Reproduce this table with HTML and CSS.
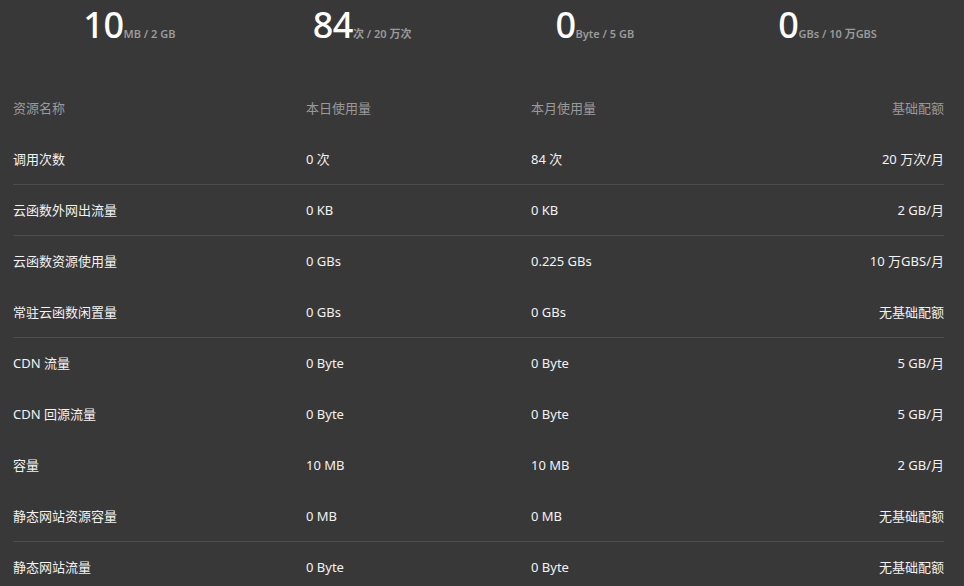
FILE: index.html
```html
<!DOCTYPE html>
<html lang="zh-CN">
<head>
<meta charset="utf-8">
<title>用量</title>
<link rel="stylesheet" href="styles.css">
</head>
<body>
<div class="page">
  <div class="stats">
    <div class="stat"><span class="num">10</span><span class="unit">MB / 2 GB</span></div>
    <div class="stat"><span class="num">84</span><span class="unit">次 / 20 万次</span></div>
    <div class="stat"><span class="num">0</span><span class="unit">Byte / 5 GB</span></div>
    <div class="stat"><span class="num">0</span><span class="unit">GBs / 10 万GBS</span></div>
  </div>
  <div class="table">
    <div class="row head"><span>资源名称</span><span>本日使用量</span><span>本月使用量</span><span class="r">基础配额</span></div>
    <div class="row line"><span>调用次数</span><span>0 次</span><span>84 次</span><span class="r">20 万次/月</span></div>
    <div class="row line"><span>云函数外网出流量</span><span>0 KB</span><span>0 KB</span><span class="r">2 GB/月</span></div>
    <div class="row"><span>云函数资源使用量</span><span>0 GBs</span><span>0.225 GBs</span><span class="r">10 万GBS/月</span></div>
    <div class="row line"><span>常驻云函数闲置量</span><span>0 GBs</span><span>0 GBs</span><span class="r">无基础配额</span></div>
    <div class="row"><span>CDN 流量</span><span>0 Byte</span><span>0 Byte</span><span class="r">5 GB/月</span></div>
    <div class="row"><span>CDN 回源流量</span><span>0 Byte</span><span>0 Byte</span><span class="r">5 GB/月</span></div>
    <div class="row"><span>容量</span><span>10 MB</span><span>10 MB</span><span class="r">2 GB/月</span></div>
    <div class="row line"><span>静态网站资源容量</span><span>0 MB</span><span>0 MB</span><span class="r">无基础配额</span></div>
    <div class="row"><span>静态网站流量</span><span>0 Byte</span><span>0 Byte</span><span class="r">无基础配额</span></div>
  </div>
</div>
</body>
</html>
```
FILE: styles.css
```css
html, body {
  margin: 0;
  padding: 0;
  background: #383838;
}
body {
  font-family: "Noto Sans", "Noto Sans CJK SC", sans-serif;
  color: #f2f2f2;
  overflow: hidden;
}
.page {
  width: 931px;
  padding: 0 20px 0 13px;
}
.stats {
  display: grid;
  grid-template-columns: repeat(4, 1fr);
  height: 83px;
}
.stat {
  text-align: center;
  line-height: 50px;
  height: 50px;
  white-space: nowrap;
}
.num {
  font-size: 36px;
  font-weight: 500;
  color: #ffffff;
  letter-spacing: -0.5px;
}
.unit {
  font-size: 11px;
  font-weight: 600;
  color: #9a9a9a;
}
.row {
  display: grid;
  grid-template-columns: 293px 225px 1fr auto;
  align-items: center;
  height: 51px;
  padding-bottom: 2px;
  box-sizing: border-box;
  font-size: 13px;
}
.row.line {
  border-bottom: 1px solid #4d4d4d;
  padding-bottom: 1px;
}
.row.head {
  color: #9a9a9a;
}
.r {
  text-align: right;
}
```
